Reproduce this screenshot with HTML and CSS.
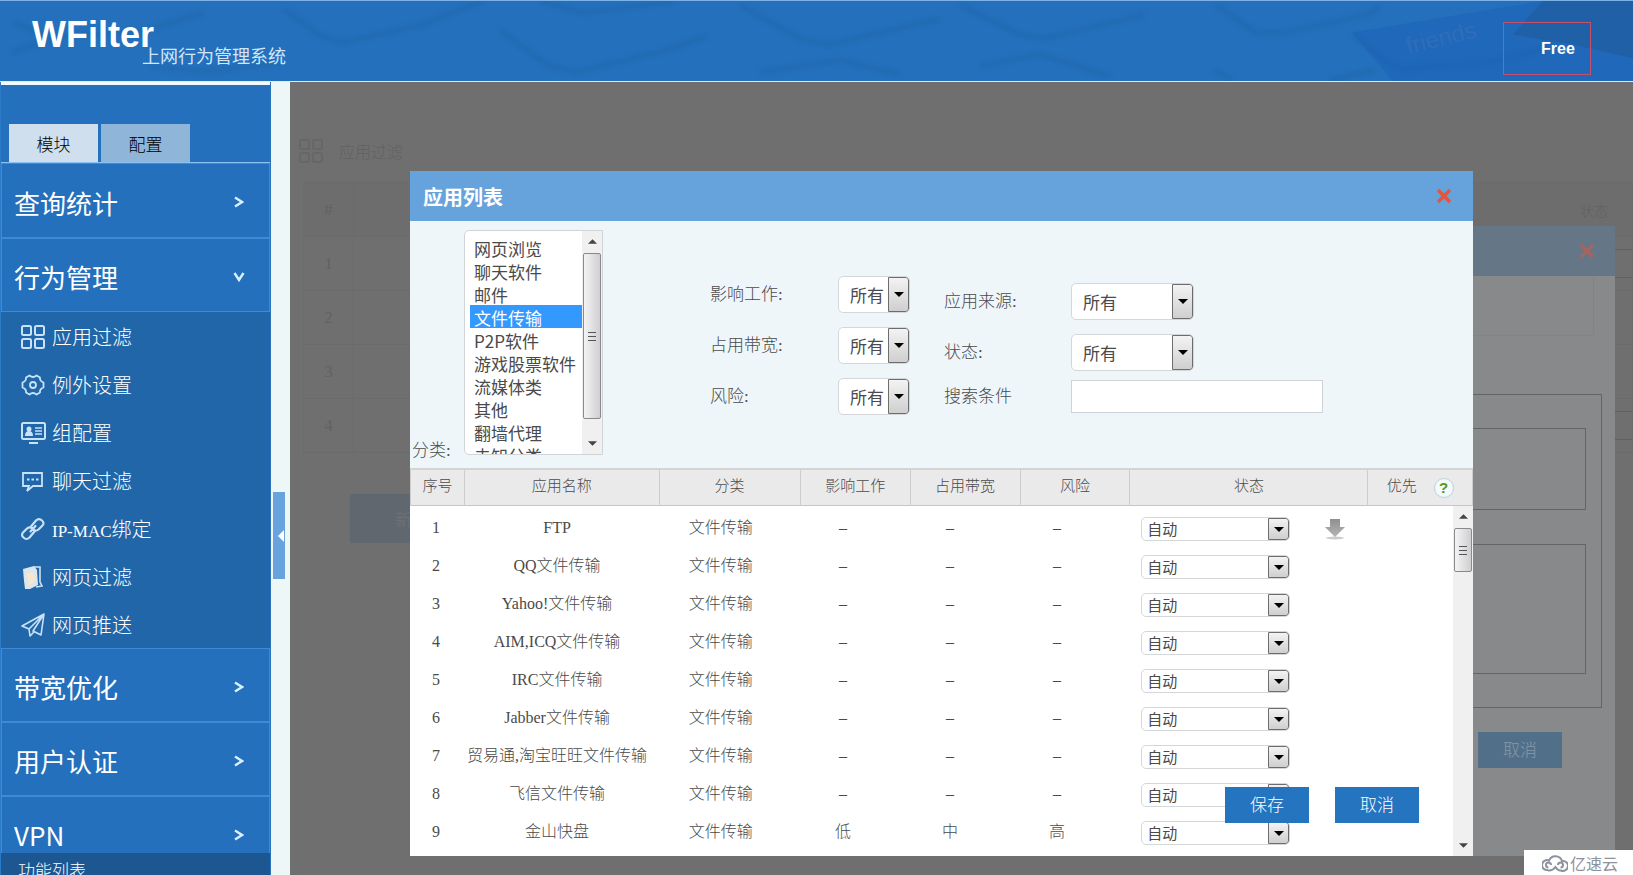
FILE: index.html
```html
<!DOCTYPE html>
<html lang="zh-CN">
<head>
<meta charset="utf-8">
<title>WFilter 上网行为管理系统</title>
<link rel="stylesheet" href="styles.css">
</head>
<body>
<svg class="defs" width="0" height="0" aria-hidden="true">
  <symbol id="tri" viewBox="0 0 10 5"><path d="M0 0h10L5 5z"/></symbol>
  <symbol id="tri-up" viewBox="0 0 10 5"><path d="M0 5h10L5 0z"/></symbol>
  <symbol id="go" viewBox="0 0 10 12"><path d="M1 1.500l7 4.500-7 4.500" fill="none" stroke="#d9f0ff" stroke-width="2.400"/></symbol>
  <symbol id="cross" viewBox="0 0 16 16"><path d="M2 2l12 12M14 2L2 14" fill="none" stroke="#e2553f" stroke-width="3.500"/></symbol>
  <symbol id="grid" viewBox="0 0 26 26"><g fill="none" stroke="currentColor" stroke-width="2"><rect x="2" y="2" width="9" height="9" rx="1.500"/><rect x="15" y="2" width="9" height="9" rx="1.500"/><rect x="2" y="15" width="9" height="9" rx="1.500"/><rect x="15" y="15" width="9" height="9" rx="1.500"/></g></symbol>
</svg>

<header class="top">
  <svg class="keys" viewBox="0 0 1633 81" preserveAspectRatio="none" aria-hidden="true">
    <g class="edges" fill="none" stroke="#1f5f9f" stroke-width="5" stroke-linejoin="round">
      <path d="M14 22l34 14 90-4 66-20M12 52l50-18M150 66l60 6 70-10"/>
      <path d="M284 8l34 26 24 8 80-18 60-24"/>
      <path d="M500 30l50 36 26 6 90-22 40-14M540 0l44 12 90-12"/>
      <path d="M740 4l60 34 30 6 110-26M760 72l80-12 60 14"/>
      <path d="M960 4l60 30 24 4 100-24M980 66l60-12 70 22"/>
      <path d="M1216 4l40 28 30 0 80-18 14-8M1216 70l16 11M1330 80l44-10"/>
      <path d="M1352 34l38 30 12 5 80-6 70-16"/>
    </g>
    <path d="M1352 32l190-32h91v81h-240z" fill="#1c5fb8" opacity=".5"/>
    <path d="M1543 0h90v58l-60-14-60-10z" fill="#1f5894" opacity=".5"/>
    <text class="keycap" x="1408" y="54" transform="rotate(-14 1408 54)">friends</text>
  </svg>
  <h1 class="logo">WFilter<small>上网行为管理系统</small></h1>
  <a class="plan" href="#free">Free</a>
</header>

<div class="body">
  <aside class="side">
    <nav class="tabs">
      <button class="tab on" type="button">模块</button>
      <button class="tab" type="button">配置</button>
    </nav>
    <nav class="menu">
      <a class="cat first" href="#q">查询统计<svg><use href="#go"/></svg></a>
      <a class="cat open" href="#b">行为管理<svg><use href="#go"/></svg></a>
      <ul class="sub">
        <li><a href="#1"><svg viewBox="0 0 26 26"><use href="#grid"/></svg>应用过滤</a></li>
        <li><a href="#2"><svg viewBox="0 0 26 26"><g fill="none" stroke="currentColor" stroke-width="1.800" stroke-linejoin="round"><path d="M9.500 3.500q3.500 3 7 0l3.500 2q-.5 3.500 3.500 5v5q-4 1.500-3.500 5l-3.500 2q-3.500-3-7 0l-3.500-2q.5-3.500-3.500-5v-5q4-1.500 3.500-5z"/><circle cx="13" cy="13" r="3"/></g></svg>例外设置</a></li>
        <li><a href="#3"><svg viewBox="0 0 26 26"><rect x="2" y="3" width="23" height="16" rx="1.500" fill="none" stroke="currentColor" stroke-width="2"/><circle cx="9" cy="9" r="2.500" fill="currentColor"/><path d="M5 16q0-5 4-5t4 5zM9 22h9v2H9z" fill="currentColor"/><path d="M15 8h7M15 11h7M15 14h7" stroke="currentColor" stroke-width="1.500"/></svg>组配置</a></li>
        <li><a href="#4"><svg viewBox="0 0 26 26"><path d="M3 5h19v13h-9l-6 5 2-5H3z" fill="none" stroke="currentColor" stroke-width="1.800"/><path d="M7 11.500h2.500M11.500 11.500h2.500M16 11.500h2.500" stroke="currentColor" stroke-width="2"/></svg>聊天过滤</a></li>
        <li><a href="#5"><svg viewBox="0 0 26 26"><g fill="none" stroke="currentColor" stroke-width="2.200" stroke-linecap="round"><path d="M11 10.500l5-6q3-3 6 0 3 2.500 0 5.500l-3.500 3.500q-2.500 2-5 .5"/><path d="M14.500 15.500l-5 6q-3 3-6 0-3-2.500 0-5.500L7 12.500q2.500-2 5-.5M10.500 15.500l5-5.500"/></g></svg><span><span class="latin">IP-MAC</span>绑定</span></a></li>
        <li><a href="#6"><svg viewBox="0 0 26 26"><path d="M3 5l11-3 3 4 1 15-8 4H5L4 17z" fill="#dbe6ee"/><path d="M6 9q9-2 9 5t-7 7z" fill="#f4e6cf"/><path d="M14 3h6v15l2 4-6 1" fill="none" stroke="#cfe2f2" stroke-width="1.600"/></svg>网页过滤</a></li>
        <li><a href="#7"><svg viewBox="0 0 26 26"><path d="M24 2L2 14l7 3L24 2l-3 21-8-4L24 2M9 17l1 7 4-4" fill="none" stroke="currentColor" stroke-width="1.600" stroke-linejoin="round"/></svg>网页推送</a></li>
      </ul>
      <a class="cat" href="#w">带宽优化<svg><use href="#go"/></svg></a>
      <a class="cat" href="#u">用户认证<svg><use href="#go"/></svg></a>
      <a class="cat" href="#v">VPN<svg><use href="#go"/></svg></a>
    </nav>
    <div class="foot">功能列表</div>
  </aside>
  <div class="split"><button type="button" aria-label="收起"><svg viewBox="0 0 6 12"><path d="M6 0v12L0 6z" fill="#fff"/></svg></button></div>

  <main class="stage">
    <section class="page">
      <h2><svg viewBox="0 0 26 26"><use href="#grid"/></svg>应用过滤</h2>
      <table class="rules">
        <tr><th class="n">#</th><th class="st">状态</th></tr>
        <tr><td class="n">1</td><td><span class="edge"></span></td></tr>
        <tr><td class="n">2</td><td></td></tr>
        <tr><td class="n">3</td><td></td></tr>
        <tr><td class="n">4</td><td><span class="edge"></span></td></tr>
      </table>
      <button class="add" type="button">新增</button>
    </section>

    <section class="back">
      <div class="back-head"><svg><use href="#cross"/></svg></div>
      <div class="back-body">
        <div class="strip"></div>
        <div class="group"><div class="box"></div><div class="box tall"></div></div>
        <button class="btn" type="button">取消</button>
      </div>
    </section>

    <section class="dialog" role="dialog" aria-labelledby="dt">
      <div class="dialog-head"><h2 id="dt">应用列表</h2><button type="button" aria-label="关闭"><svg><use href="#cross"/></svg></button></div>
      <form class="filter">
        <label class="cat-label" for="cat">分类:</label>
        <div class="list">
          <select id="cat" size="9">
            <option>网页浏览</option><option>聊天软件</option><option>邮件</option><option selected>文件传输</option><option>P2P软件</option><option>游戏股票软件</option><option>流媒体类</option><option>其他</option><option>翻墙代理</option><option>未知分类</option>
          </select>
          <div class="bar"><svg><use href="#tri-up"/></svg><i class="thumb"></i><svg><use href="#tri"/></svg></div>
        </div>
        <div class="fields narrow">
          <label for="f1">影响工作:</label><span class="pick"><select id="f1"><option>所有</option></select><b><svg><use href="#tri"/></svg></b></span>
          <label for="f2">占用带宽:</label><span class="pick"><select id="f2"><option>所有</option></select><b><svg><use href="#tri"/></svg></b></span>
          <label for="f3">风险:</label><span class="pick"><select id="f3"><option>所有</option></select><b><svg><use href="#tri"/></svg></b></span>
        </div>
        <div class="fields wide">
          <label for="f4">应用来源:</label><span class="pick"><select id="f4"><option>所有</option></select><b><svg><use href="#tri"/></svg></b></span>
          <label for="f5">状态:</label><span class="pick"><select id="f5"><option>所有</option></select><b><svg><use href="#tri"/></svg></b></span>
          <label for="f6">搜索条件</label><input id="f6" type="text">
        </div>
      </form>
      <table class="head">
        <tr><th class="h1">序号</th><th class="h2">应用名称</th><th class="h3">分类</th><th class="h4">影响工作</th><th class="h4">占用带宽</th><th class="h4">风险</th><th class="h5">状态</th><th>优先<span class="help">?</span></th></tr>
      </table>
      <div class="scroll">
        <table class="rows">
          <tr><td class="c1">1</td><td class="c2">FTP</td><td class="c3">文件传输</td><td class="c4">–</td><td class="c4">–</td><td class="c4">–</td><td><div class="state"><span class="pick"><select aria-label="状态 1"><option>自动</option></select><b><svg><use href="#tri"/></svg></b></span><svg class="down" viewBox="0 0 20 22"><defs><linearGradient id="dg" x2="0" y2="1"><stop stop-color="#8f8f8f"/><stop offset="1" stop-color="#b5b5b5"/></linearGradient></defs><ellipse cx="10" cy="20" rx="9" ry="1.500" fill="#ccc"/><path d="M5 1h10v8h5L10 19 0 9h5z" fill="url(#dg)"/></svg></div></td></tr>
          <tr><td>2</td><td>QQ文件传输</td><td>文件传输</td><td>–</td><td>–</td><td>–</td><td><div class="state"><span class="pick"><select aria-label="状态 2"><option>自动</option></select><b><svg><use href="#tri"/></svg></b></span></div></td></tr>
          <tr><td>3</td><td>Yahoo!文件传输</td><td>文件传输</td><td>–</td><td>–</td><td>–</td><td><div class="state"><span class="pick"><select aria-label="状态 3"><option>自动</option></select><b><svg><use href="#tri"/></svg></b></span></div></td></tr>
          <tr><td>4</td><td>AIM,ICQ文件传输</td><td>文件传输</td><td>–</td><td>–</td><td>–</td><td><div class="state"><span class="pick"><select aria-label="状态 4"><option>自动</option></select><b><svg><use href="#tri"/></svg></b></span></div></td></tr>
          <tr><td>5</td><td>IRC文件传输</td><td>文件传输</td><td>–</td><td>–</td><td>–</td><td><div class="state"><span class="pick"><select aria-label="状态 5"><option>自动</option></select><b><svg><use href="#tri"/></svg></b></span></div></td></tr>
          <tr><td>6</td><td>Jabber文件传输</td><td>文件传输</td><td>–</td><td>–</td><td>–</td><td><div class="state"><span class="pick"><select aria-label="状态 6"><option>自动</option></select><b><svg><use href="#tri"/></svg></b></span></div></td></tr>
          <tr><td>7</td><td>贸易通,淘宝旺旺文件传输</td><td>文件传输</td><td>–</td><td>–</td><td>–</td><td><div class="state"><span class="pick"><select aria-label="状态 7"><option>自动</option></select><b><svg><use href="#tri"/></svg></b></span></div></td></tr>
          <tr><td>8</td><td>飞信文件传输</td><td>文件传输</td><td>–</td><td>–</td><td>–</td><td><div class="state"><span class="pick"><select aria-label="状态 8"><option>自动</option></select><b><svg><use href="#tri"/></svg></b></span></div></td></tr>
          <tr><td>9</td><td>金山快盘</td><td>文件传输</td><td>低</td><td>中</td><td>高</td><td><div class="state"><span class="pick"><select aria-label="状态 9"><option>自动</option></select><b><svg><use href="#tri"/></svg></b></span></div></td></tr>
        </table>
        <div class="bar short"><svg><use href="#tri-up"/></svg><i class="thumb"></i><svg><use href="#tri"/></svg></div>
      </div>
      <div class="actions"><button class="btn" type="button">保存</button><button class="btn" type="button">取消</button></div>
    </section>

    <div class="brand"><svg viewBox="0 0 26 18"><g fill="none" stroke="#8d929b" stroke-width="2"><path d="M6 16a5 5 0 1 1 1-9.500A7 7 0 0 1 20 7a5 5 0 1 1-1 9.500q-3 .5-5.500-3.500-3 4-7.500 3.500"/><path d="M9 11a2.500 2.500 0 1 0-2.500 2.500M16 11a2.500 2.500 0 1 1 2.500 2.500"/></g></svg>亿速云</div>
  </main>
</div>
</body>
</html>
```
FILE: styles.css
```css
* { box-sizing: border-box; }
body {
  margin: 0;
  height: 100vh;
  display: flex;
  flex-direction: column;
  overflow: hidden;
  font-family: "Liberation Serif", "Noto Sans CJK SC", serif;
  font-weight: 300;
  color: #4a4a4a;
}
h1, h2, ul { margin: 0; padding: 0; font-weight: 300; }
ul { list-style: none; }
a { color: inherit; text-decoration: none; }
button, select, input { font: inherit; color: inherit; border: 0; padding: 0; border-radius: 0; background: none; }
select { appearance: none; outline: none; }
table { border-collapse: collapse; table-layout: fixed; width: 100%; }
th { font-weight: 300; }
td, th { padding: 0; }
.defs { position: absolute; }

/* header */
.top {
  position: relative;
  flex: none;
  height: 82px;
  display: flex;
  justify-content: space-between;
  align-items: flex-start;
  padding: 0 42px 0 32px;
  background: #2470bc;
  border-top: 1px solid #7db2e6;
  border-bottom: 1px solid #dfeaf5;
  overflow: hidden;
}
.keys { position: absolute; inset: 0; width: 100%; height: 100%; }
.edges { opacity: .35; filter: blur(2px); }
.keycap { font: 400 24px "Liberation Sans", sans-serif; fill: #2f6dba; }
.logo { position: relative; display: flex; align-items: flex-start; padding-top: 14px; font: 700 36px/40px "Liberation Sans", sans-serif; color: #fff; }
.logo small { margin: 30px 0 0 -12px; font: 400 18px/20px "Noto Sans CJK SC", sans-serif; color: #d3e6f9; }
.plan {
  position: relative;
  width: 88px;
  height: 53px;
  margin-top: 21px;
  padding-left: 37px;
  border: 1px solid #c9506c;
  font: 700 16px/51px "Liberation Sans", sans-serif;
  color: #fff;
}

.body { flex: 1; display: flex; min-height: 0; }

/* sidebar */
.side { position: relative; flex: none; width: 271px; background: #2470bd; border-left: 1px solid #2b7bc9; border-right: 1px solid #2a72ba; overflow: hidden; color: #fff; }
.tabs { display: flex; gap: 3px; align-items: flex-end; height: 81px; padding-left: 8px; border-top: 3px solid #f4fafd; border-bottom: 1px solid #8cc0f0; }
.tab { width: 89px; height: 38px; padding-top: 1px; font-size: 17px; background: #8fb5d9; color: #000; }
.tab.on { background: #cfdfee; }
.cat { display: flex; justify-content: space-between; align-items: center; height: 74px; padding: 3px 25px 0 12px; border: 1px solid #3f89d6; font-family: "Noto Sans CJK SC", sans-serif; font-weight: 400; font-size: 26px; }
.cat.first { height: 75px; }
.cat svg { width: 10px; height: 12px; }
.cat.open svg { transform: rotate(90deg); }
.sub { background: #2166a8; }
.sub a { display: flex; align-items: center; gap: 6px; height: 48px; padding: 1px 0 0 19px; font-size: 20px; }
.sub svg { width: 26px; height: 26px; color: #c8e2fa; }
.latin { font-size: 17px; }
.foot { position: absolute; left: 0; right: 0; bottom: 0; height: 22px; padding: 10px 0 0 17px; font-size: 17px; line-height: 18px; background: #1c5792; }

.split { flex: none; width: 19px; background: #eef7f7; padding: 410px 0 0 2px; }
.split button { width: 12px; height: 87px; display: flex; align-items: center; justify-content: flex-end; padding-right: 1px; background: #69a3de; }
.split svg { width: 6px; height: 12px; }

/* dimmed page behind the dialogs */
.stage { position: relative; flex: 1; background: #6f6f6f; overflow: hidden; color: #626262; }
.page { padding: 54px 0 0 8px; }
.page h2 { display: flex; align-items: center; gap: 15px; height: 30px; font-size: 16px; }
.page h2 svg { width: 26px; height: 26px; color: #676767; }
.rules { margin: 16px 0 0 5px; width: calc(100% - 5px); font-size: 17px; }
.rules tr { height: 54px; border: 1px solid #6b6b6b; }
.rules th { background: #6d6d6d; }
.rules .n { width: 50px; border-right: 1px solid #6b6b6b; text-align: center; }
.rules .st { text-align: right; padding-right: 24px; font-size: 14px; }
.edge { display: block; height: 29px; margin-left: auto; width: 30px; border-top: 1px solid #606060; border-bottom: 1px solid #606060; }
.add { width: 124px; height: 49px; margin: 41px 0 0 52px; background: #60676e; color: #6f7478; font-size: 17px; }

.back { position: absolute; left: 240px; right: 18px; top: 144px; bottom: 19px; background: #88898a; }
.back-head { display: flex; align-items: center; justify-content: flex-end; height: 50px; padding-right: 20px; background: #657686; }
.back-head svg { width: 16px; height: 16px; opacity: .5; }
.back-body { padding: 0 13px 0 20px; }
.strip { height: 60px; margin-right: 8px; border: solid #828384; border-width: 0 1px 1px 0; }
.group { margin-top: 58px; height: 314px; padding: 33px 15px; border: 1px solid #636465; display: flex; flex-direction: column; gap: 34px; }
.box { height: 82px; border: 1px solid #636465; }
.box.tall { height: 130px; }
.back .btn { display: block; margin: 24px 40px 0 auto; background: #526f8a; color: #8599aa; }

/* application list dialog */
.dialog { position: absolute; left: 120px; right: 160px; top: 89px; bottom: 19px; display: flex; flex-direction: column; background: #fff; color: #4a4a4a; }
.dialog-head { flex: none; display: flex; align-items: center; justify-content: space-between; height: 50px; padding: 0 21px 0 13px; background: #66a2dc; color: #fff; }
.dialog-head h2 { font-size: 20px; font-weight: 700; }
.dialog-head svg { display: block; width: 16px; height: 16px; }
.filter { flex: none; display: flex; align-items: flex-start; height: 247px; padding-top: 9px; background: #eef6fa; font-size: 17px; }
.cat-label { width: 54px; padding: 207px 0 0 2px; line-height: 28px; }
.list { display: flex; width: 139px; height: 225px; border: 1px solid #d0d4d6; border-radius: 5px 0 0 5px; background: #fff; overflow: hidden; font-family: "Noto Sans CJK SC", sans-serif; font-weight: 400; }
.list select { flex: 1; min-width: 0; height: 223px; padding: 5px 0 0 5px; overflow: hidden; }
.list option { height: 23px; min-height: 23px; line-height: 21px; padding: 0 0 2px 4px; }
.list option:checked { background: #39f linear-gradient(#39f, #39f); -webkit-text-fill-color: #fff; }
.bar { flex: none; display: flex; flex-direction: column; align-items: center; width: 20px; padding: 8px 0; background: #f0f0f1; }
.bar svg { flex: none; width: 9px; height: 5px; fill: #444; }
.thumb {
  width: 18px;
  height: 166px;
  margin: 9px 0 auto;
  border: 1px solid #8a8a8a;
  border-radius: 2px;
  background:
    linear-gradient(#555, #555) 50% calc(50% - 4px) / 8px 1px no-repeat,
    linear-gradient(#555, #555) 50% 50% / 8px 1px no-repeat,
    linear-gradient(#555, #555) 50% calc(50% + 4px) / 8px 1px no-repeat,
    linear-gradient(90deg, #f4f4f4, #cfcfd2);
}
.short .thumb { height: 44px; }
.fields { display: grid; }
.fields label { line-height: 37px; }
.narrow { margin: 46px 0 0 107px; grid-template-columns: 128px 72px; row-gap: 14px; }
.wide { margin: 53px 0 0 34px; grid-template-columns: 127px 252px; grid-template-rows: 51px 46px 33px; align-items: start; }
.wide label:last-of-type { line-height: 33px; }
.wide .pick { width: 123px; }
.wide input { height: 33px; border: 1px solid #cdd3d6; background: #fff; padding: 0 8px; }
.pick { display: flex; height: 37px; border: 1px solid #d4d7d9; border-radius: 5px; background: #fff; overflow: hidden; font-family: "Noto Sans CJK SC", sans-serif; font-weight: 400; }
.pick select { flex: 1; min-width: 0; padding-left: 11px; }
.pick b { flex: none; width: 21px; display: flex; align-items: center; justify-content: center; border: 1px solid #6d6d6d; border-radius: 0 3px 3px 0; background: linear-gradient(#f3f3f3, #cfcfcf); }
.pick svg { width: 10px; height: 5px; fill: #000; }

.head { flex: none; height: 38px; font-size: 15px; background: #eaeaea; border-top: 2px solid #d2d4d5; border-bottom: 1px solid #c6c6c6; }
.head th { border: solid #cdcdcd; border-width: 0 1px; padding-bottom: 6px; }
.h1 { width: 5.100%; }
.h2 { width: 18.300%; }
.h3 { width: 13.300%; }
.h4 { width: 10.350%; }
.h5 { width: 22.400%; }
.help { display: inline-block; width: 20px; height: 20px; margin: -6px 0 -6px 17px; vertical-align: middle; border: 1px solid #bcd0de; border-radius: 50%; background: #f4f9fb; color: #4f9a1c; font: 700 15px/18px "Liberation Sans", sans-serif; }

.scroll { flex: 1; min-height: 0; display: flex; align-items: stretch; overflow: hidden; font-size: 16px; }
.rows { flex: 1; height: 342px; margin-top: 4px; }
.rows tr { height: 38px; }
.rows td { text-align: center; padding: 0 0 3px; line-height: 20px; white-space: nowrap; }
.c1 { width: 5%; }
.c2 { width: 18.200%; }
.c3 { width: 13.200%; }
.c4 { width: 10.250%; }
.state { display: flex; align-items: center; gap: 35px; padding: 3px 0 0 31px; }
.state .pick { width: 149px; height: 24px; font-size: 15px; }
.state .pick select { padding-left: 5px; line-height: 20px; }
.down { width: 20px; height: 22px; }

.btn { width: 84px; height: 36px; padding-bottom: 3px; background: #2574bf; color: #fff; font-size: 17px; }
.actions { position: absolute; right: 54px; bottom: 33px; display: flex; gap: 26px; }

.brand { position: absolute; right: 0; bottom: 0; display: flex; align-items: center; gap: 2px; width: 109px; height: 25px; padding-left: 18px; background: #fff; color: #8d929b; font: 400 16px/24px "Noto Sans CJK SC", sans-serif; }
.brand svg { width: 26px; height: 18px; }
```
